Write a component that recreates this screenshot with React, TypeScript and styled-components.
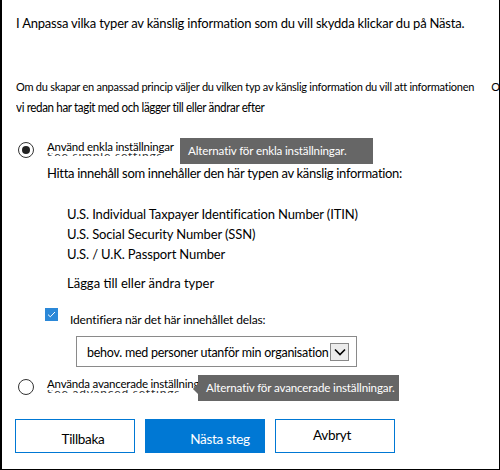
import React from "react";
import styled, { createGlobalStyle } from "styled-components";

const Global = createGlobalStyle`
  html, body { margin: 0; padding: 0; background: #fff; }
`;

const FONT = `Lato, "Open Sans", "Liberation Sans", sans-serif`;

const Frame = styled.div`
  width: 500px;
  height: 470px;
  box-sizing: border-box;
  border: 1px solid #000;
  border-top: none;
  border-left-width: 2px;
  overflow: hidden;
  position: relative;
  display: flex;
  flex-direction: column;
  padding-left: 14px;
  font-family: ${FONT};
  color: #000;
  background: #fff;
`;

const Text = styled.div<{ $size?: number; $top?: number; $left?: number; $ls?: number }>`
  font-size: ${(p) => p.$size ?? 13}px;
  line-height: 16px;
  letter-spacing: ${(p) => p.$ls ?? 0}px;
  margin-top: ${(p) => p.$top ?? 0}px;
  margin-left: ${(p) => p.$left ?? 0}px;
  white-space: nowrap;
`;

const Condensed = styled(Text)`
  transform: scaleX(0.93);
  transform-origin: left center;
`;

const Hint = styled.div`
  font-size: 11px;
  line-height: 14px;
  letter-spacing: -0.25px;
  margin-top: 49px;
  white-space: nowrap;
  display: flex;
  gap: 17px;
`;

const RadioRow = styled.div<{ $top: number }>`
  position: relative;
  display: flex;
  align-items: center;
  height: 20px;
  margin-top: ${(p) => p.$top}px;
  margin-left: 2px;
`;

const RadioCircle = styled.span<{ $checked?: boolean }>`
  width: 16px;
  height: 16px;
  box-sizing: border-box;
  border: 1.5px solid #333;
  border-radius: 50%;
  display: flex;
  align-items: center;
  justify-content: center;
  flex: none;
  &::after {
    content: "";
    display: ${(p) => (p.$checked ? "block" : "none")};
    width: 8px;
    height: 8px;
    border-radius: 50%;
    background: #222;
  }
`;

const LabelStack = styled.div`
  display: flex;
  flex-direction: column;
  margin-left: 13px;
  margin-top: -4px;
`;

const RadioLabel = styled.span`
  font-size: 11.5px;
  line-height: 13px;
  letter-spacing: -0.2px;
  white-space: nowrap;
`;

const Ghost = styled.span`
  height: 3px;
  overflow: hidden;
  font-size: 12px;
  line-height: 12px;
  color: #333;
  white-space: nowrap;
  letter-spacing: 0.8px;
  span {
    display: block;
    margin-top: -3px;
  }
`;

const Tooltip = styled.div<{ $left: number; $width: number; $arrow?: boolean }>`
  position: absolute;
  left: ${(p) => p.$left}px;
  top: -2px;
  width: ${(p) => p.$width}px;
  height: 26px;
  box-sizing: border-box;
  background: #666;
  color: #fff;
  font-size: 11.6px;
  letter-spacing: -0.15px;
  line-height: 26px;
  padding-left: 8px;
  white-space: nowrap;
  &::before {
    content: "";
    display: ${(p) => (p.$arrow ? "block" : "none")};
    position: absolute;
    left: -5px;
    top: 9px;
    border-top: 5px solid transparent;
    border-bottom: 5px solid transparent;
    border-right: 5px solid #666;
  }
`;

const List = styled.div`
  display: flex;
  flex-direction: column;
  margin-top: 23px;
  margin-left: 51px;
`;

const ListItem = styled.div`
  font-size: 13px;
  line-height: 20px;
  letter-spacing: -0.13px;
  white-space: nowrap;
`;

const CheckRow = styled.div`
  display: flex;
  align-items: flex-start;
  margin-top: 17px;
  margin-left: 29px;
  height: 20px;
`;

const CheckBox = styled.span`
  width: 13px;
  height: 13px;
  background: #2b88d8;
  display: flex;
  align-items: center;
  justify-content: center;
  flex: none;
`;

const CheckLabel = styled.span`
  margin-left: 12px;
  margin-top: 4px;
  font-size: 12px;
  line-height: 16px;
  letter-spacing: -0.15px;
  white-space: nowrap;
`;

const Select = styled.div`
  position: relative;
  width: 281px;
  height: 31px;
  box-sizing: border-box;
  border: 1px solid #8a8a8a;
  margin-top: 8px;
  margin-left: 60px;
  padding-left: 10px;
  padding-top: 8px;
  font-size: 12.5px;
  line-height: 16px;
  letter-spacing: -0.25px;
  white-space: nowrap;
`;

const Chevron = styled.span`
  position: absolute;
  right: 7px;
  top: 6px;
  width: 19px;
  height: 18px;
  box-sizing: border-box;
  border: 1px solid #888;
  background: #ececec;
  display: flex;
  align-items: center;
  justify-content: center;
`;

const ButtonRow = styled.div`
  display: flex;
  gap: 10px;
  margin-top: 22px;
  margin-left: -1px;
`;

const Button = styled.button<{ $primary?: boolean; $dx: number; $dy: number }>`
  width: 120px;
  height: 34px;
  box-sizing: border-box;
  border: 1px solid #0078d4;
  background: ${(p) => (p.$primary ? "#0078d4" : "#fff")};
  color: ${(p) => (p.$primary ? "#fff" : "#000")};
  font-family: ${FONT};
  font-size: 13.5px;
  letter-spacing: -0.3px;
  padding: ${(p) => `${Math.max(0, p.$dy)}px 0 ${Math.max(0, -p.$dy)}px ${Math.max(0, p.$dx)}px`};
  padding-right: ${(p) => Math.max(0, -p.$dx)}px;
  display: flex;
  align-items: center;
  justify-content: center;
`;

export default function App() {
  return (
    <>
      <Global />
      <Frame>
        <Text $top={15} $ls={-0.2}>I Anpassa vilka typer av känslig information som du vill skydda klickar du på Nästa.</Text>
        <Hint>
          <span>Om du skapar en anpassad princip väljer du vilken typ av känslig information du vill att informationen</span>
          <span>Om</span>
        </Hint>
        <Condensed $top={6} $size={12.5} $ls={-0.4}>vi redan har tagit med och lägger till eller ändrar efter</Condensed>

        <RadioRow $top={24}>
          <RadioCircle $checked />
          <LabelStack>
            <RadioLabel>Använd enkla inställningar</RadioLabel>
            <Ghost>
              <span>See simple settings</span>
            </Ghost>
          </LabelStack>
          <Tooltip $left={162} $width={193}>Alternativ för enkla inställningar.</Tooltip>
        </RadioRow>

        <Text $top={5} $left={31} $ls={-0.31}>Hitta innehåll som innehåller den här typen av känslig information:</Text>

        <List>
          <ListItem>U.S. Individual Taxpayer Identification Number (ITIN)</ListItem>
          <ListItem>U.S. Social Security Number (SSN)</ListItem>
          <ListItem>U.S. / U.K. Passport Number</ListItem>
        </List>

        <Text $top={11} $left={51}>Lägga till eller ändra typer</Text>

        <CheckRow>
          <CheckBox>
            <svg width="9" height="7" viewBox="0 0 9 7">
              <path d="M1 3.6 L3.3 5.8 L8 1" fill="none" stroke="#fff" strokeWidth="1" />
            </svg>
          </CheckBox>
          <CheckLabel>Identifiera när det här innehållet delas:</CheckLabel>
        </CheckRow>

        <Select>
          behov. med personer utanför min organisation
          <Chevron>
            <svg width="12" height="8" viewBox="0 0 12 8">
              <path d="M1 1.5 L6 6.5 L11 1.5" fill="none" stroke="#000" strokeWidth="1.6" />
            </svg>
          </Chevron>
        </Select>

        <RadioRow $top={10}>
          <RadioCircle />
          <LabelStack>
            <RadioLabel>Använda avancerade inställningar</RadioLabel>
            <Ghost>
              <span>See advanced settings</span>
            </Ghost>
          </LabelStack>
          <Tooltip $left={180} $width={201} $arrow>Alternativ för avancerade inställningar.</Tooltip>
        </RadioRow>

        <ButtonRow>
          <Button $dx={16} $dy={6}>Tillbaka</Button>
          <Button $primary $dx={30} $dy={6}>Nästa steg</Button>
          <Button $dx={-6} $dy={-3}>Avbryt</Button>
        </ButtonRow>
      </Frame>
    </>
  );
}
